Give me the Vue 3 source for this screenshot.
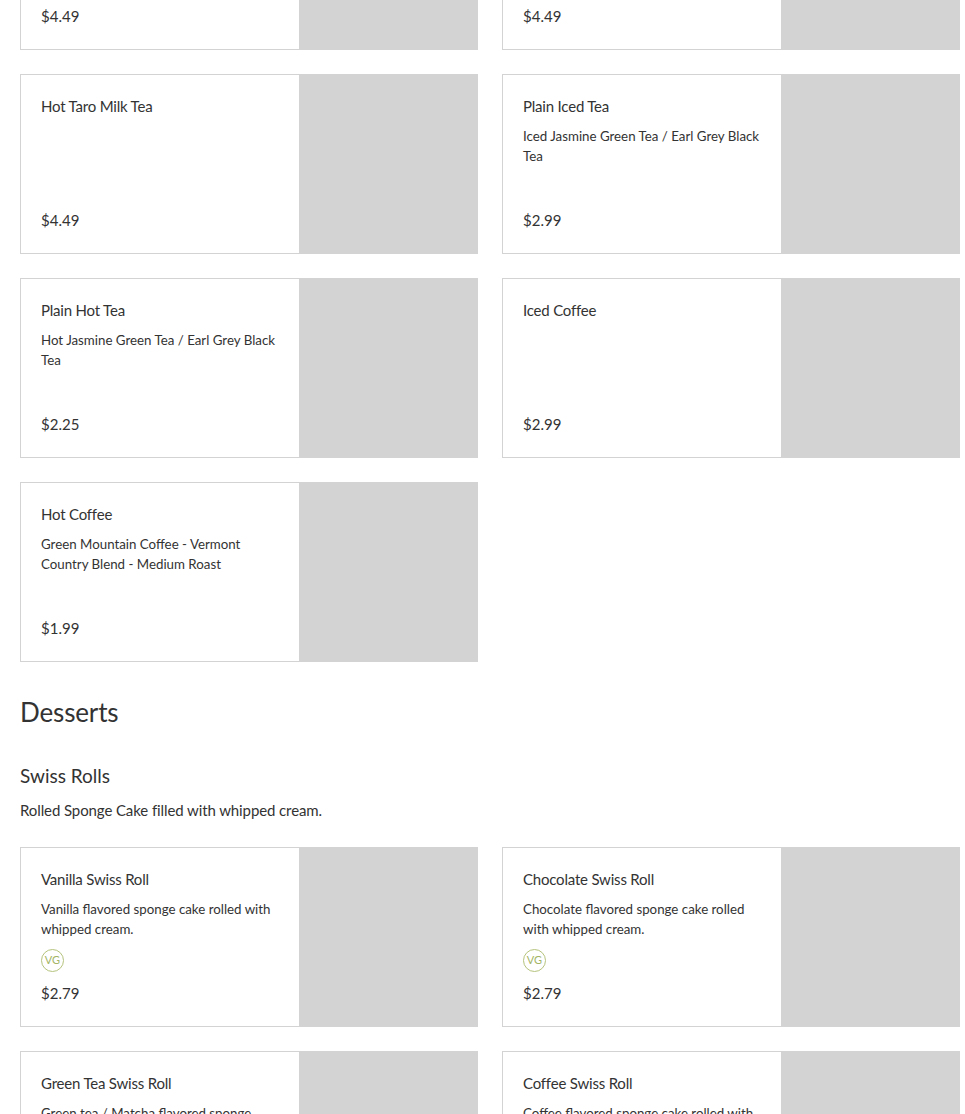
<script setup>
const topItems = [
  { name: 'Hot Milk Tea', price: '$4.49' },
  { name: 'Iced Milk Tea', price: '$4.49' },
  { name: 'Hot Taro Milk Tea', price: '$4.49' },
  { name: 'Plain Iced Tea', desc: 'Iced Jasmine Green Tea / Earl Grey Black Tea', price: '$2.99' },
  { name: 'Plain Hot Tea', desc: 'Hot Jasmine Green Tea / Earl Grey Black Tea', price: '$2.25' },
  { name: 'Iced Coffee', price: '$2.99' },
  { name: 'Hot Coffee', desc: 'Green Mountain Coffee - Vermont Country Blend - Medium Roast', price: '$1.99' },
]
const rolls = [
  { name: 'Vanilla Swiss Roll', desc: 'Vanilla flavored sponge cake rolled with whipped cream.', price: '$2.79', vg: true },
  { name: 'Chocolate Swiss Roll', desc: 'Chocolate flavored sponge cake rolled with whipped cream.', price: '$2.79', vg: true },
  { name: 'Green Tea Swiss Roll', desc: 'Green tea / Matcha flavored sponge cake rolled with whipped cream.', price: '$2.79', vg: true },
  { name: 'Coffee Swiss Roll', desc: 'Coffee flavored sponge cake rolled with whipped cream.', price: '$2.79', vg: true },
]
</script>

<template>
  <main class="page">
    <div class="menu">
      <section class="grid">
        <article v-for="item in topItems" :key="item.name" class="card">
          <div class="body">
            <h4 class="name">{{ item.name }}</h4>
            <p v-if="item.desc" class="desc">{{ item.desc }}</p>
            <p class="price">{{ item.price }}</p>
          </div>
          <div class="photo"></div>
        </article>
      </section>

      <h2 class="category">Desserts</h2>
      <h3 class="group">Swiss Rolls</h3>
      <p class="group-desc">Rolled Sponge Cake filled with whipped cream.</p>

      <section class="grid">
        <article v-for="item in rolls" :key="item.name" class="card">
          <div class="body">
            <h4 class="name">{{ item.name }}</h4>
            <p class="desc">{{ item.desc }}</p>
            <span v-if="item.vg" class="vg">VG</span>
            <p class="price">{{ item.price }}</p>
          </div>
          <div class="photo"></div>
        </article>
      </section>
    </div>
  </main>
</template>

<style>
html, body { margin: 0; background: #fff; overflow: hidden; }
</style>

<style scoped>
.page {
  height: 1114px;
  overflow: hidden;
  background: #fff;
  color: #333;
  font-family: "Lato", "Open Sans", sans-serif;
}
.menu {
  width: 940px;
  margin-top: -130px;
  padding-left: 20px;
}
.grid {
  display: grid;
  grid-template-columns: 458px 458px;
  column-gap: 24px;
  row-gap: 24px;
}
.card {
  display: flex;
  height: 180px;
  box-sizing: border-box;
  border: 1px solid #d3d3d3;
  border-right: 0;
}
.body {
  flex: 1;
  min-width: 0;
  display: flex;
  flex-direction: column;
  align-items: flex-start;
  padding: 20px 20px 22px;
}
.photo {
  flex: none;
  width: 179px;
  margin: -1px 0;
  background: #d3d3d3;
}
.name {
  margin: 0;
  font-size: 15px;
  line-height: 22px;
  letter-spacing: -0.2px;
  font-weight: 400;
}
.desc {
  margin: 10px 0 0;
  font-size: 13.3px;
  line-height: 19.5px;
}
.vg {
  box-sizing: border-box;
  width: 23px;
  height: 23px;
  margin-top: 10px;
  border: 1.5px solid #b4c37c;
  border-radius: 50%;
  color: #a3b565;
  font-size: 11px;
  line-height: 20px;
  text-align: center;
}
.price {
  margin: auto 0 0;
  font-size: 15px;
  line-height: 22px;
}
.category {
  margin: 32px 0 0;
  font-size: 26px;
  line-height: 36px;
  letter-spacing: -0.15px;
  font-weight: 400;
}
.group {
  margin: 32px 0 0;
  font-size: 19px;
  line-height: 28px;
  font-weight: 400;
}
.group-desc {
  margin: 9px 0 0;
  font-size: 15px;
  line-height: 22px;
  letter-spacing: -0.1px;
}
.group-desc + .grid { margin-top: 26px; }
</style>
